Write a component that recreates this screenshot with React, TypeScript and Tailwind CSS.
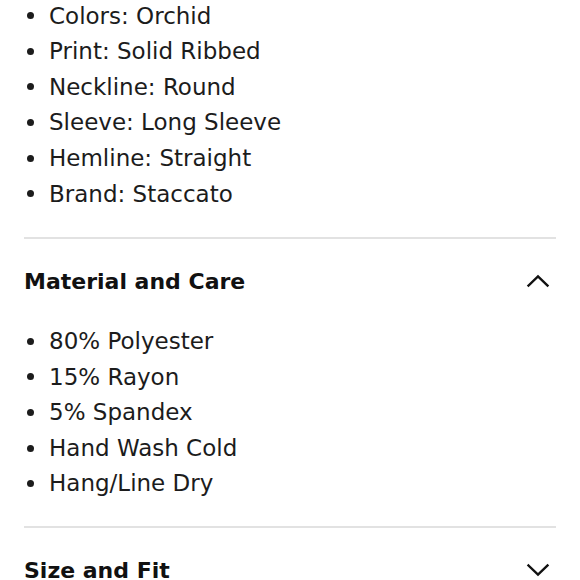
import React from "react";

const Chevron = ({ up }: { up: boolean }) => (
  <svg width="24" height="24" viewBox="0 0 24 24" fill="none" stroke="#111" strokeWidth="2.4" strokeLinecap="square" strokeLinejoin="miter">
    {up ? <path d="M2.5 16.5 L12 7.5 L21.5 16.5" /> : <path d="M2.5 7.5 L12 16.5 L21.5 7.5" />}
  </svg>
);

const List = ({ items }: { items: string[] }) => (
  <ul className="flex flex-col">
    {items.map((t) => (
      <li key={t} className="flex items-center h-[35.6px] text-[23px] text-[#1c1c1c]">
        <span className="w-[7px] h-[7px] rounded-full bg-[#1c1c1c] ml-[3px] mr-[15px]" />
        <span>{t}</span>
      </li>
    ))}
  </ul>
);

const Header = ({ title, up }: { title: string; up: boolean }) => (
  <div className="flex items-center justify-between h-[85px] pr-[6px]">
    <span className="text-[22px] font-bold text-[#111]">{title}</span>
    <Chevron up={up} />
  </div>
);

export default function App() {
  return (
    <div className="w-[580px] h-[580px] overflow-hidden bg-white px-[24px]" style={{ fontFamily: '"DejaVu Sans", sans-serif' }}>
      <div className="mt-[-2px]">
        <List items={["Colors: Orchid", "Print: Solid Ribbed", "Neckline: Round", "Sleeve: Long Sleeve", "Hemline: Straight", "Brand: Staccato"]} />
      </div>
      <div className="mt-[25px] h-[2px] bg-[#e2e2e2]" />
      <Header title="Material and Care" up={true} />
      <List items={["80% Polyester", "15% Rayon", "5% Spandex", "Hand Wash Cold", "Hang/Line Dry"]} />
      <div className="mt-[24px] h-[2px] bg-[#e2e2e2]" />
      <Header title="Size and Fit" up={false} />
    </div>
  );
}
